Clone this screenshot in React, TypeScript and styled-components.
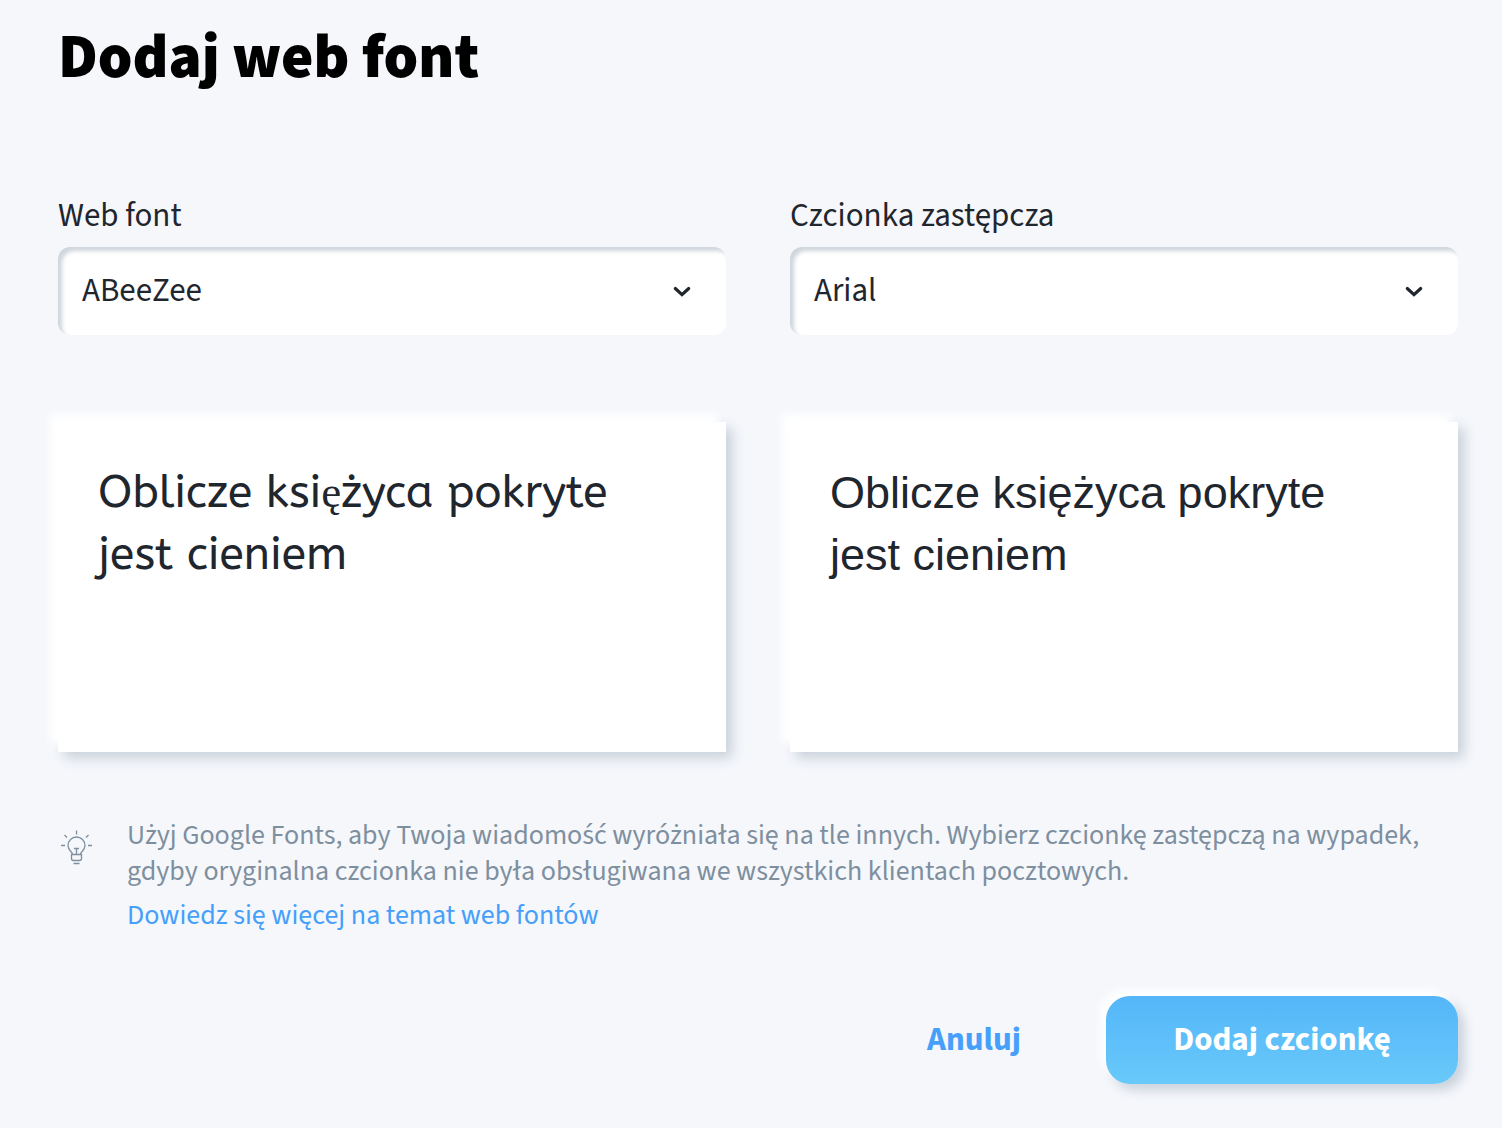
import { useState } from "react";
import type { ReactNode } from "react";
import styled, { createGlobalStyle } from "styled-components";

const GlobalStyle = createGlobalStyle`
  *, *::before, *::after {
    box-sizing: border-box;
  }

  body {
    margin: 0;
    background: #f5f7fb;
    color: #1f262e;
    font-family: "Source Sans 3", "Source Sans Pro", "Noto Sans", sans-serif;
    font-size: 33px;
    line-height: 40px;
  }
`;

const Dialog = styled.form`
  padding: 16px 44px 44px 58px;
`;

const Title = styled.h1`
  margin: 0 0 96px;
  color: #000;
  font-size: 62px;
  font-weight: 900;
  line-height: 84px;
`;

const Columns = styled.div`
  display: grid;
  grid-template-columns: 1fr 1fr;
  column-gap: 64px;
`;

const Column = styled.div`
  display: flex;
  flex-direction: column;
  min-width: 0;
`;

const Label = styled.label`
  margin-bottom: 11px;
`;

const SelectBox = styled.div`
  position: relative;
  margin-bottom: 87px;
`;

const Select = styled.select`
  display: block;
  width: 100%;
  height: 88px;
  padding: 0 80px 0 24px;
  border: 0;
  border-radius: 12px;
  background: #fff;
  box-shadow: inset 4px 4px 4px #ced5dc;
  color: inherit;
  font: inherit;
  appearance: none;
`;

const Chevron = styled.svg`
  position: absolute;
  top: 50%;
  right: 34px;
  width: 20px;
  height: 20px;
  transform: translateY(-50%);
  pointer-events: none;
`;

const Preview = styled.p<{ $family: string }>`
  min-height: 330px;
  margin: 0;
  padding: 40px 72px 40px 40px;
  background: #fff;
  box-shadow:
    -8px -8px 8px #ffffff,
    6px 6px 12px #c8d0da;
  font-family: ${(p) => p.$family};
  font-size: 45px;
  line-height: 62px;
`;

const SerifGlyph = styled.span`
  font-family: "Liberation Serif", serif;
  line-height: 1;
`;

const Hint = styled.div`
  display: flex;
  gap: 31px;
  margin-top: 65px;
  color: #7e8f9f;
  font-size: 28px;
  line-height: 36px;
`;

const BulbIcon = styled.svg`
  flex: none;
  width: 38px;
  height: 38px;
  margin-top: 12px;
`;

const HintText = styled.p`
  margin: 0 0 8px;
`;

const HintLink = styled.a`
  color: #469ffa;
  text-decoration: none;
`;

const Actions = styled.div`
  display: flex;
  justify-content: flex-end;
  gap: 20px;
  margin-top: 63px;
`;

const Button = styled.button<{ $primary?: boolean }>`
  min-width: ${(p) => (p.$primary ? 352 : 224)}px;
  height: 88px;
  padding: 0 40px;
  border: 0;
  border-radius: 24px;
  background: ${(p) => (p.$primary ? "linear-gradient(#54b6f9, #68c9fa)" : "transparent")};
  box-shadow: ${(p) => (p.$primary ? "-6px -6px 8px #ffffff, 6px 6px 12px #c8d0da" : "none")};
  color: ${(p) => (p.$primary ? "#fff" : "#469ffa")};
  font: inherit;
  font-weight: 700;
  cursor: pointer;
`;

interface FontFieldProps {
  id: string;
  label: string;
  options: string[];
  previewFamily: string;
  children: ReactNode;
}

function FontField({ id, label, options, previewFamily, children }: FontFieldProps) {
  const [font, setFont] = useState(options[0]);
  return (
    <Column>
      <Label htmlFor={id}>{label}</Label>
      <SelectBox>
        <Select id={id} value={font} onChange={(e) => setFont(e.target.value)}>
          {options.map((name) => (
            <option key={name}>{name}</option>
          ))}
        </Select>
        <Chevron viewBox="0 0 20 20" fill="none" aria-hidden="true">
          <path d="M3.300 7.500 10 13.600l6.700-6.100" stroke="#1f262e" strokeWidth="3.200" strokeLinecap="round" />
        </Chevron>
      </SelectBox>
      <Preview $family={previewFamily}>{children}</Preview>
    </Column>
  );
}

export default function App() {
  return (
    <>
      <GlobalStyle />
      <Dialog onSubmit={(e) => e.preventDefault()}>
        <Title>Dodaj web font</Title>
        <Columns>
          <FontField
            id="web-font"
            label="Web font"
            options={["ABeeZee"]}
            previewFamily='ABeeZee, "Noto Sans", sans-serif'
          >
            Oblicze ksi<SerifGlyph>ę</SerifGlyph>życa pokryte jest cieniem
          </FontField>
          <FontField
            id="fallback-font"
            label="Czcionka zastępcza"
            options={["Arial"]}
            previewFamily='Arial, "Liberation Sans", sans-serif'
          >
            Oblicze księżyca pokryte jest cieniem
          </FontField>
        </Columns>
        <Hint>
          <BulbIcon viewBox="0 0 38 38" fill="none" stroke="#7e8f9f" strokeWidth="1.300" aria-hidden="true">
            <path d="M14.500 25.500c0-3-4.500-4-4.500-9a8.500 8.500 0 0 1 17 0c0 5-4.500 6-4.500 9" />
            <path d="M13.500 25.500h10v4q0 2-2 2h-6q-2 0-2-2zM18.500 25v-5.500M16 19.500h5M15.500 34.500h6" />
            <path d="M18.500 1.500v4M3 16.500h4M30 16.500h4M6.500 6l2.500 2.500M30.500 6 28 8.500" />
          </BulbIcon>
          <div>
            <HintText>
              Użyj Google Fonts, aby Twoja wiadomość wyróżniała się na tle innych. Wybierz czcionkę zastępczą na
              wypadek, gdyby oryginalna czcionka nie była obsługiwana we wszystkich klientach pocztowych.
            </HintText>
            <HintLink href="#web-fonts">Dowiedz się więcej na temat web fontów</HintLink>
          </div>
        </Hint>
        <Actions>
          <Button type="button">Anuluj</Button>
          <Button type="submit" $primary>
            Dodaj czcionkę
          </Button>
        </Actions>
      </Dialog>
    </>
  );
}
